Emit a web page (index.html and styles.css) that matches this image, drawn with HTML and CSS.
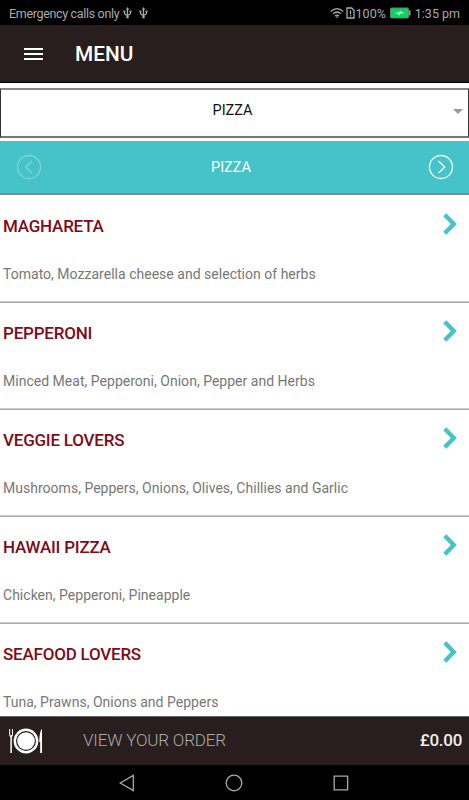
FILE: index.html
```
<!DOCTYPE html>
<html lang="en">

<head>

  <meta charset="UTF-8">
  <meta name="viewport" content="width=device-width, initial-scale=1.0">

  <title>Menu</title>

  <link rel="stylesheet" href="styles.css">

</head>

<body>

  <div class="status">
    <span class="carrier">Emergency calls only</span>
    <svg class="usb" width="9" height="12" viewBox="0 0 9 12">
      <path d="M4.5 1v9M1.5 4v2.2q0 1.3 3 2.3M7.5 4v2.2q0 1.3-3 2.3" />
      <path class="solid" d="M4.5 0l1.5 2.5h-3zM.6 3.4h1.8v1.8H.6zM6.6 3.4h1.8v1.8H6.6zM3.3 9.3h2.4v2H3.3z" />
    </svg>
    <svg class="usb" width="9" height="12" viewBox="0 0 9 12">
      <path d="M4.5 1v9M1.5 4v2.2q0 1.3 3 2.3M7.5 4v2.2q0 1.3-3 2.3" />
      <path class="solid" d="M4.5 0l1.5 2.5h-3zM.6 3.4h1.8v1.8H.6zM6.6 3.4h1.8v1.8H6.6zM3.3 9.3h2.4v2H3.3z" />
    </svg>

    <div class="status-right">
      <svg class="wifi" width="14" height="12" viewBox="0 0 14 12">
        <path d="M.8 4.4q6.2-5.6 12.4 0M3 6.8q4-3.6 8 0M5 9q2-1.8 4 0" />
        <path class="solid" d="M5.7 9.6h2.6L7 11.3z" />
      </svg>
      <svg class="sim" width="9" height="12" viewBox="0 0 9 12">
        <path d="M1 1h4.7L8 3.3V11H1zM4.5 3.5v3.7M4.5 8.2v1.3" />
      </svg>
      <span class="percent">100%</span>
      <svg class="battery" width="21" height="12" viewBox="0 0 21 12">
        <rect x=".5" y="1" width="18" height="10" rx="1" fill="#00d95a" stroke="#777" />
        <path d="M19.8 3.5v5" stroke="#aaa" stroke-width="1.4" />
        <path d="M4.5 6l5-.8.5-1.7 2 1.7 2.8.8-5 .8-.3 1.7-2.2-1.7z" fill="#d9ffe5" />
      </svg>
      <span class="time">1:35 pm</span>
    </div>
  </div>

  <div class="header">
    <div class="burger">
      <div></div>
      <div></div>
      <div></div>
    </div>
    <p class="title">MENU</p>
  </div>

  <div class="select">
    <span>PIZZA</span>
    <div class="caret"></div>
  </div>

  <div class="category">
    <svg class="previous" width="26" height="26" viewBox="0 0 26 26">
      <circle cx="13" cy="13" r="11.5" />
      <path d="M15.8 7l-6.2 6 6.2 6" />
    </svg>
    <span>PIZZA</span>
    <svg class="next" width="26" height="26" viewBox="0 0 26 26">
      <circle cx="13" cy="13" r="11.5" />
      <path d="M10.5 7l6.2 6-6.2 6" />
    </svg>
  </div>

  <div class="items">

    <div class="item">
      <p class="name">MAGHARETA</p>
      <p class="description">Tomato, Mozzarella cheese and selection of herbs</p>
      <svg class="arrow" width="14" height="22" viewBox="0 0 14 22">
        <path d="M1.8 1.8L10.8 11l-9 9.2" />
      </svg>
    </div>

    <div class="item">
      <p class="name">PEPPERONI</p>
      <p class="description">Minced Meat, Pepperoni, Onion, Pepper and Herbs</p>
      <svg class="arrow" width="14" height="22" viewBox="0 0 14 22">
        <path d="M1.8 1.8L10.8 11l-9 9.2" />
      </svg>
    </div>

    <div class="item">
      <p class="name">VEGGIE LOVERS</p>
      <p class="description">Mushrooms, Peppers, Onions, Olives, Chillies and Garlic</p>
      <svg class="arrow" width="14" height="22" viewBox="0 0 14 22">
        <path d="M1.8 1.8L10.8 11l-9 9.2" />
      </svg>
    </div>

    <div class="item">
      <p class="name">HAWAII PIZZA</p>
      <p class="description">Chicken, Pepperoni, Pineapple</p>
      <svg class="arrow" width="14" height="22" viewBox="0 0 14 22">
        <path d="M1.8 1.8L10.8 11l-9 9.2" />
      </svg>
    </div>

    <div class="item">
      <p class="name">SEAFOOD LOVERS</p>
      <p class="description">Tuna, Prawns, Onions and Peppers</p>
      <svg class="arrow" width="14" height="22" viewBox="0 0 14 22">
        <path d="M1.8 1.8L10.8 11l-9 9.2" />
      </svg>
    </div>

  </div>

  <div class="order">
    <svg class="plate" width="34" height="26" viewBox="0 0 34 26">
      <circle cx="17" cy="13" r="11.2" fill="none" stroke="#fff" stroke-width="2.4" />
      <circle cx="17" cy="13" r="8.8" fill="#fff" />
      <path d="M.7 1v6q0 1.8 1.3 2M3.5 1v6q0 1.8-1.3 2" fill="none" stroke="#fff" />
      <path d="M2.1 7v18" fill="none" stroke="#fff" stroke-width="1.5" />
      <path d="M33 1v24h-1.8V14h-.9q0-11 2.7-13z" fill="#fff" />
    </svg>
    <span class="view">VIEW YOUR ORDER</span>
    <span class="total">£0.00</span>
  </div>

  <div class="nav">
    <svg width="16" height="18" viewBox="0 0 16 18">
      <path d="M14.3 1.5v15L1.3 9z" />
    </svg>
    <svg width="18" height="18" viewBox="0 0 18 18">
      <circle cx="9" cy="9" r="7.8" />
    </svg>
    <svg width="16" height="18" viewBox="0 0 16 18">
      <path d="M1.2 2.2h13.4v13.6H1.2z" />
    </svg>
  </div>

</body>

</html>
```

FILE: styles.css
```
* {
  box-sizing: border-box;
}

body {
  margin: 0;
  height: 800px;
  display: flex;
  flex-direction: column;
  overflow: hidden;
  background-color: #fff;
  font-family: Roboto, sans-serif;
}

p {
  margin: 0;
}

svg {
  display: block;
  flex-shrink: 0;
}

.status {
  height: 25px;
  flex-shrink: 0;
  display: flex;
  align-items: center;
  padding: 1px 9px 0 9px;
  background-color: #000;
  color: #aaa;
  font-size: 12.5px;
}

.carrier {
  width: 111px;
  letter-spacing: -0.33px;
  white-space: nowrap;
}

.usb {
  margin-left: 3px;
  margin-right: 4px;
}

.usb,
.wifi,
.sim {
  fill: none;
  stroke: #aaa;
  stroke-width: 1.3;
}

.solid {
  fill: #aaa;
  stroke: none;
}

.status-right {
  display: flex;
  align-items: center;
  margin-left: auto;
}

.sim {
  margin-left: 2px;
  margin-right: 1px;
}

.battery {
  margin-left: 4px;
  margin-right: 4px;
}

.header {
  height: 58px;
  flex-shrink: 0;
  display: flex;
  align-items: center;
  padding-left: 24px;
  background-color: #281e1d;
  border-bottom: 1px solid #000;
}

.burger {
  width: 19px;
  display: flex;
  flex-direction: column;
  gap: 3px;
}

.burger div {
  height: 2px;
  background-color: #fff;
}

.title {
  margin-left: 32px;
  margin-top: 1px;
  color: #fff;
  font-size: 20.8px;
  font-weight: 500;
}

.select {
  height: 50px;
  flex-shrink: 0;
  display: flex;
  justify-content: center;
  position: relative;
  margin-top: 5px;
  padding-top: 12px;
  padding-right: 4px;
  border: 1px solid #333;
  border-top: 2px solid #888;
  border-bottom: 2px solid #777;
  color: #111;
  font-size: 14.5px;
  line-height: 17px;
}

.caret {
  position: absolute;
  right: 5px;
  top: 19px;
  border: 5px solid transparent;
  border-top-color: #999;
  border-bottom: none;
}

.category {
  height: 54px;
  flex-shrink: 0;
  display: flex;
  align-items: center;
  justify-content: space-between;
  margin-top: 3px;
  padding: 0 15px 0 16px;
  background-color: #46c2c9;
  border-bottom: 2px solid #888;
  color: #fff;
  font-size: 14.5px;
}

.category span {
  margin-right: 8px;
}

.category svg {
  fill: none;
  stroke: #fff;
  stroke-width: 1.3;
}

.previous {
  opacity: 0.3;
}

.items {
  flex: 1;
  overflow: hidden;
}

.item {
  height: 107px;
  position: relative;
  padding: 21px 3px 0;
  box-shadow: 0 1px #aaa;
  border-bottom: 1px solid #ccc;
}

.name {
  color: #7f0a18;
  font-size: 17px;
  font-weight: 500;
  letter-spacing: -0.22px;
  line-height: 20px;
}

.description {
  margin-top: 30px;
  color: #777;
  font-size: 14px;
  letter-spacing: 0.02px;
  line-height: 16px;
}

.arrow {
  position: absolute;
  right: 12px;
  top: 18px;
  fill: none;
  stroke: #46c2c9;
  stroke-width: 4.3;
}

.order {
  height: 49px;
  flex-shrink: 0;
  display: flex;
  align-items: center;
  padding: 0 7px 0 9px;
  background-color: #281e1d;
  border-top: 1px solid #666;
}

.view {
  margin-left: 40px;
  margin-bottom: 2px;
  color: #aaa;
  font-size: 17px;
  font-weight: 300;
  letter-spacing: -0.18px;
}

.total {
  margin-left: auto;
  margin-bottom: 2px;
  color: #eee;
  font-size: 17px;
  font-weight: 500;
  letter-spacing: -0.3px;
}

.nav {
  height: 35px;
  flex-shrink: 0;
  display: flex;
  align-items: center;
  justify-content: center;
  gap: 90px;
  padding-right: 2px;
  background-color: #000;
}

.nav svg {
  fill: none;
  stroke: #aaa;
  stroke-width: 1.3;
}
```
